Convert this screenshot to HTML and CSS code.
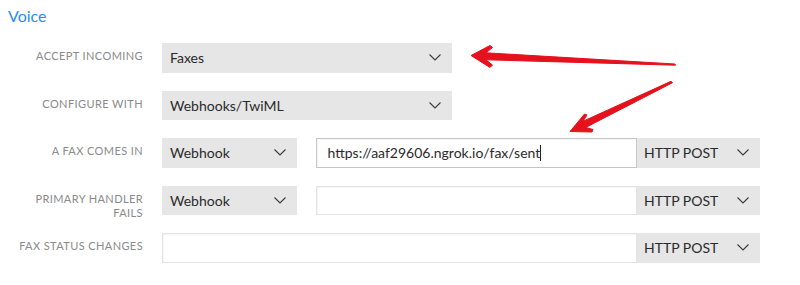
FILE: index.html
```html
<!DOCTYPE html>
<html>
<head>
<meta charset="utf-8">
<link rel="stylesheet" href="styles.css">
</head>
<body>
<div class="page">
  <h2 class="title">Voice</h2>
  <div class="form">
    <div class="label">Accept incoming</div>
    <div class="field">
      <div class="select w-wide"><span>Faxes</span><svg class="chev" viewBox="0 0 12 7"><path d="M0.5 0.5 L6 6 L11.5 0.5"/></svg></div>
    </div>

    <div class="label">Configure with</div>
    <div class="field">
      <div class="select w-wide"><span>Webhooks/TwiML</span><svg class="chev" viewBox="0 0 12 7"><path d="M0.5 0.5 L6 6 L11.5 0.5"/></svg></div>
    </div>

    <div class="label">A fax comes in</div>
    <div class="field">
      <div class="select w-small"><span>Webhook</span><svg class="chev" viewBox="0 0 12 7"><path d="M0.5 0.5 L6 6 L11.5 0.5"/></svg></div>
      <div class="input focused"><span>https://aaf29606.ngrok.io/fax/sent</span><i class="caret"></i></div>
      <div class="select w-method"><span>HTTP POST</span><svg class="chev" viewBox="0 0 12 7"><path d="M0.5 0.5 L6 6 L11.5 0.5"/></svg></div>
    </div>

    <div class="label">Primary handler fails</div>
    <div class="field">
      <div class="select w-small"><span>Webhook</span><svg class="chev" viewBox="0 0 12 7"><path d="M0.5 0.5 L6 6 L11.5 0.5"/></svg></div>
      <div class="input"></div>
      <div class="select w-method"><span>HTTP POST</span><svg class="chev" viewBox="0 0 12 7"><path d="M0.5 0.5 L6 6 L11.5 0.5"/></svg></div>
    </div>

    <div class="label">Fax status changes</div>
    <div class="field">
      <div class="input"></div>
      <div class="select w-method"><span>HTTP POST</span><svg class="chev" viewBox="0 0 12 7"><path d="M0.5 0.5 L6 6 L11.5 0.5"/></svg></div>
    </div>
  </div>

  <svg class="arrows" width="800" height="285" viewBox="0 0 800 285">
    <polygon points="471,55.5 490,45.5 492.5,47.5 486,52.8 675,64 675.5,65.2 486,59.8 492.5,65 490,67.5"/>
    <polygon points="570,131.5 584.5,114 587,115 583,121.3 671,81.3 672.5,82.7 585.8,127.4 593,129.5 592,132"/>
  </svg>
</div>
</body>
</html>
```

FILE: styles.css
```css
html, body {
  margin: 0;
  padding: 0;
  background: #ffffff;
}

.page {
  position: relative;
  width: 800px;
  height: 285px;
  padding: 5px 0 0 8px;
  box-sizing: border-box;
  font-family: Lato, "Open Sans", sans-serif;
}

.title {
  margin: 0;
  font-size: 16px;
  line-height: 21px;
  font-weight: 400;
  color: #2b8cf2;
}

.form {
  margin-top: 17px;
  display: grid;
  grid-template-columns: 135px 598px;
  grid-auto-rows: 29.5px;
  column-gap: 19px;
  row-gap: 18px;
}

.label {
  text-align: right;
  text-transform: uppercase;
  font-size: 11px;
  line-height: 14.3px;
  letter-spacing: 0.4px;
  color: #8a8a8a;
  padding-top: 6px;
}

.field {
  display: flex;
  align-items: stretch;
}

.select {
  display: flex;
  align-items: center;
  justify-content: space-between;
  background: #e6e6e6;
  box-sizing: border-box;
  padding: 0 11px 0 8px;
  font-size: 14px;
  color: #2a2a2a;
}

.w-wide { width: 290px; }
.w-small { width: 135px; margin-right: 18.5px; }
.w-method { width: 123px; padding-left: 7px; }

.chev {
  width: 12px;
  height: 7px;
  fill: none;
  stroke: #3a3a3a;
  stroke-width: 1.1;
}

.input {
  flex: 1;
  box-sizing: border-box;
  border: 1px solid #e3e3e3;
  box-shadow: inset 1px 1px 1px rgba(0, 0, 0, 0.04);
  background: #fff;
  display: flex;
  align-items: center;
  padding-left: 11px;
  font-size: 14px;
  color: #2a2a2a;
}

.input.focused {
  border-color: #c6c6c6;
}

.caret {
  display: inline-block;
  width: 1px;
  height: 16px;
  background: #222;
}

.arrows {
  position: absolute;
  left: 0;
  top: 0;
  pointer-events: none;
}

.arrows polygon {
  fill: #e5121d;
  stroke: #e5121d;
  stroke-width: 1;
  stroke-linejoin: round;
}
```
